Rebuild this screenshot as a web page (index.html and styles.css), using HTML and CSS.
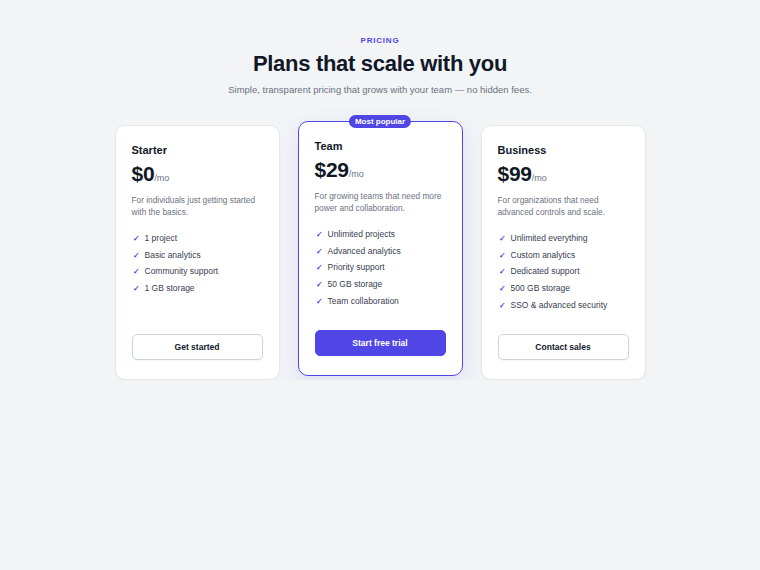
FILE: index.html
```html
<!DOCTYPE html>
<html>
<head>
  <meta charset="UTF-8" />
  <title>Pricing</title>
  <link rel="stylesheet" href="styles.css">
</head>
<body>

  <div class="intro">
    <div class="eyebrow">PRICING</div>
    <h1>Plans that scale with you</h1>
    <p class="lead">Simple, transparent pricing that grows with your team — no hidden fees.</p>
  </div>

  <div class="plans">

    <div class="plan">
      <h2>Starter</h2>
      <div class="price">$0<span>/mo</span></div>
      <p class="blurb">For individuals just getting started with the basics.</p>
      <ul class="features">
        <li>1 project</li>
        <li>Basic analytics</li>
        <li>Community support</li>
        <li>1 GB storage</li>
      </ul>
      <a class="btn" href="#">Get started</a>
    </div>

    <div class="plan featured">
      <span class="badge">Most popular</span>
      <h2>Team</h2>
      <div class="price">$29<span>/mo</span></div>
      <p class="blurb">For growing teams that need more power and collaboration.</p>
      <ul class="features">
        <li>Unlimited projects</li>
        <li>Advanced analytics</li>
        <li>Priority support</li>
        <li>50 GB storage</li>
        <li>Team collaboration</li>
      </ul>
      <a class="btn btn-primary" href="#">Start free trial</a>
    </div>

    <div class="plan">
      <h2>Business</h2>
      <div class="price">$99<span>/mo</span></div>
      <p class="blurb">For organizations that need advanced controls and scale.</p>
      <ul class="features">
        <li>Unlimited everything</li>
        <li>Custom analytics</li>
        <li>Dedicated support</li>
        <li>500 GB storage</li>
        <li>SSO &amp; advanced security</li>
      </ul>
      <a class="btn" href="#">Contact sales</a>
    </div>

  </div>

</body>
</html>
```

FILE: styles.css
```css
body {
  background: #f3f4f6;
  color: #111827;
  font-family: "Liberation Sans", Arial, sans-serif;
  margin: 0;
  padding: 36px 0 0;
}

.intro {
  text-align: center;
}

.eyebrow {
  color: #4f46e5;
  font-size: 8px;
  font-weight: bold;
  letter-spacing: 0.1em;
  line-height: 10px;
}

h1 {
  margin: 4px 0 0;
  font-size: 22px;
  line-height: 28px;
  letter-spacing: -0.3px;
  color: #111827;
}

.lead {
  margin: 5px 0 0;
  font-size: 9.5px;
  line-height: 14px;
  color: #6b7280;
}

.plans {
  display: grid;
  grid-template-columns: repeat(3, 165px);
  gap: 18px;
  justify-content: center;
  margin-top: 28px;
}

.plan {
  position: relative;
  display: flex;
  flex-direction: column;
  background: white;
  border: 1px solid #e5e7eb;
  border-radius: 10px;
  padding: 17px 16px 19px;
  box-shadow: 0 1px 2px rgba(0, 0, 0, 0.04);
}

.plan.featured {
  border: 1.5px solid #4f46e5;
  transform: translateY(-4px);
  box-shadow: 0 8px 24px rgba(79, 70, 229, 0.12);
}

.badge {
  position: absolute;
  top: -7px;
  left: 50%;
  transform: translateX(-50%);
  background: #4f46e5;
  color: white;
  font-size: 8px;
  font-weight: bold;
  line-height: 13px;
  padding: 0 6px;
  border-radius: 8px;
  white-space: nowrap;
}

h2 {
  margin: 0;
  font-size: 11px;
  line-height: 14px;
}

.price {
  margin-top: 5px;
  font-size: 21px;
  font-weight: bold;
  line-height: 24px;
  letter-spacing: -0.3px;
}

.price span {
  font-size: 9px;
  font-weight: normal;
  color: #6b7280;
  letter-spacing: 0;
}

.blurb {
  margin: 4px 0 0;
  font-size: 8.3px;
  line-height: 12px;
  color: #6b7280;
}

.features {
  list-style: none;
  margin: 15px 0 0;
  padding: 0;
  display: flex;
  flex-direction: column;
  gap: 5.7px;
}

.features li {
  font-size: 8.5px;
  line-height: 11px;
  color: #374151;
  padding-left: 13px;
  position: relative;
}

.features li::before {
  content: "✓";
  position: absolute;
  left: 1px;
  color: #4f46e5;
  font-weight: bold;
  font-size: 8px;
}

.btn {
  margin-top: auto;
  display: block;
  text-align: center;
  text-decoration: none;
  font-size: 8.5px;
  font-weight: bold;
  color: #111827;
  line-height: 24px;
  border: 1px solid #d1d5db;
  border-radius: 5px;
  background: white;
  box-shadow: 0 1px 2px rgba(0, 0, 0, 0.05);
}

.btn-primary {
  background: #4f46e5;
  border-color: #4f46e5;
  color: white;
}

.plan.featured .features {
  margin-bottom: 23px;
}
```
